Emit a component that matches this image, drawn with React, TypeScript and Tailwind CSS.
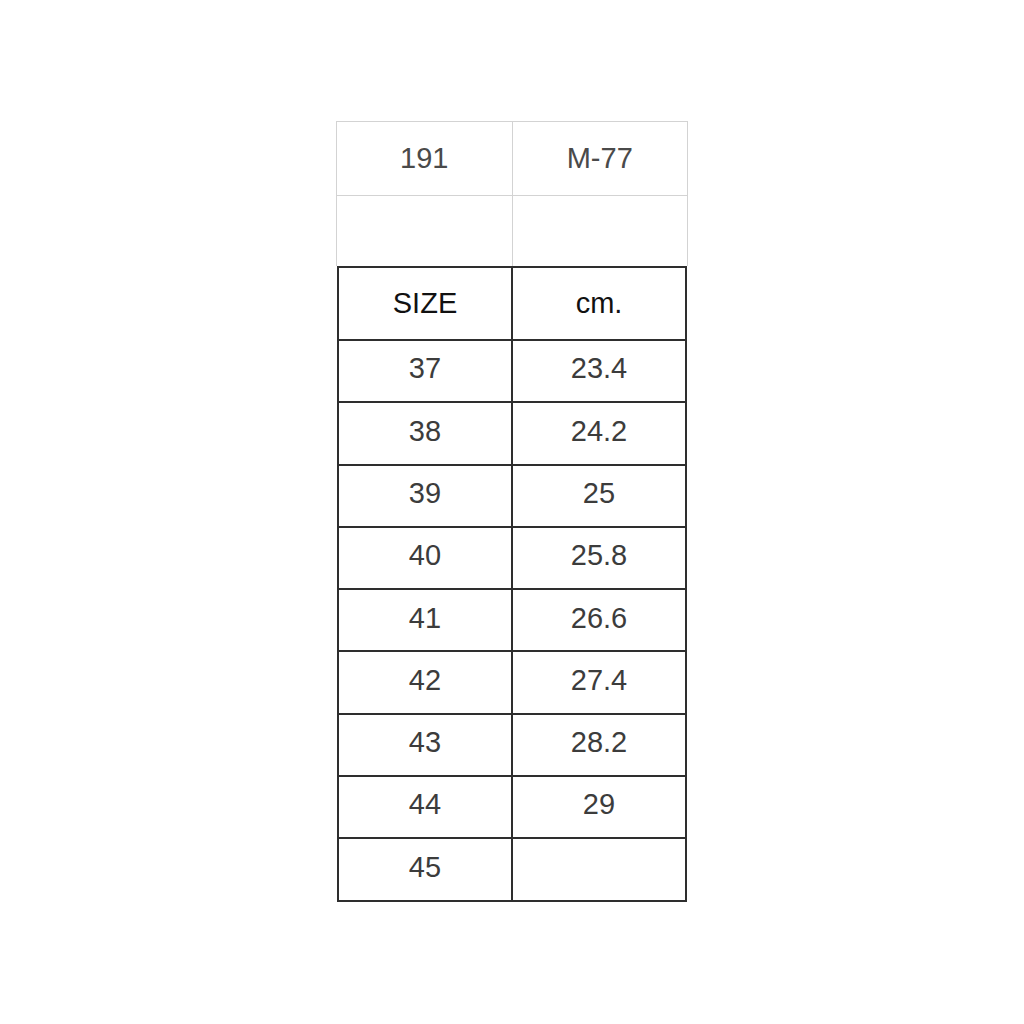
import React from "react";

const rows: [string, string][] = [
  ["37", "23.4"],
  ["38", "24.2"],
  ["39", "25"],
  ["40", "25.8"],
  ["41", "26.6"],
  ["42", "27.4"],
  ["43", "28.2"],
  ["44", "29"],
  ["45", ""],
];

const font = { fontFamily: '"Liberation Sans", Arial, sans-serif' };

const App: React.FC = () => {
  return (
    <div className="w-full h-[1024px] bg-white pt-[121px] pl-[336px]" style={font}>
      <div className="w-[352px]">
        {/* light grey top part */}
        <div className="border-t border-l border-[#d3d3d3]">
          <div className="flex h-[74px]">
            <div className="w-[176px] flex items-center justify-center border-r border-b border-[#d3d3d3] text-[29px] text-[#4a4a4a]">
              191
            </div>
            <div className="w-[176px] flex items-center justify-center border-r border-b border-[#d3d3d3] text-[29px] text-[#4a4a4a]">
              M-77
            </div>
          </div>
          <div className="flex h-[70px]">
            <div className="w-[176px] border-r border-[#d3d3d3]" />
            <div className="w-[176px] border-r border-[#d3d3d3]" />
          </div>
        </div>

        {/* size table */}
        <div className="ml-px w-[350px] border-t-2 border-l-2 border-[#2e2e2e]">
          <div className="flex h-[73px]">
            <div className="w-[175px] flex items-center justify-center border-r-2 border-b-2 border-[#2e2e2e] text-[29px] text-[#111]">
              SIZE
            </div>
            <div className="w-[175px] flex items-center justify-center border-r-2 border-b-2 border-[#2e2e2e] text-[29px] text-[#111]">
              cm.
            </div>
          </div>
          {rows.map(([size, cm]) => (
            <div key={size} className="flex h-[62.3px]">
              <div className="w-[175px] flex items-center justify-center pb-1 border-r-2 border-b-2 border-[#2e2e2e] text-[29px] text-[#3c3c3c]">
                {size}
              </div>
              <div className="w-[175px] flex items-center justify-center pb-1 border-r-2 border-b-2 border-[#2e2e2e] text-[29px] text-[#3c3c3c]">
                {cm}
              </div>
            </div>
          ))}
        </div>
      </div>
    </div>
  );
};

export default App;
